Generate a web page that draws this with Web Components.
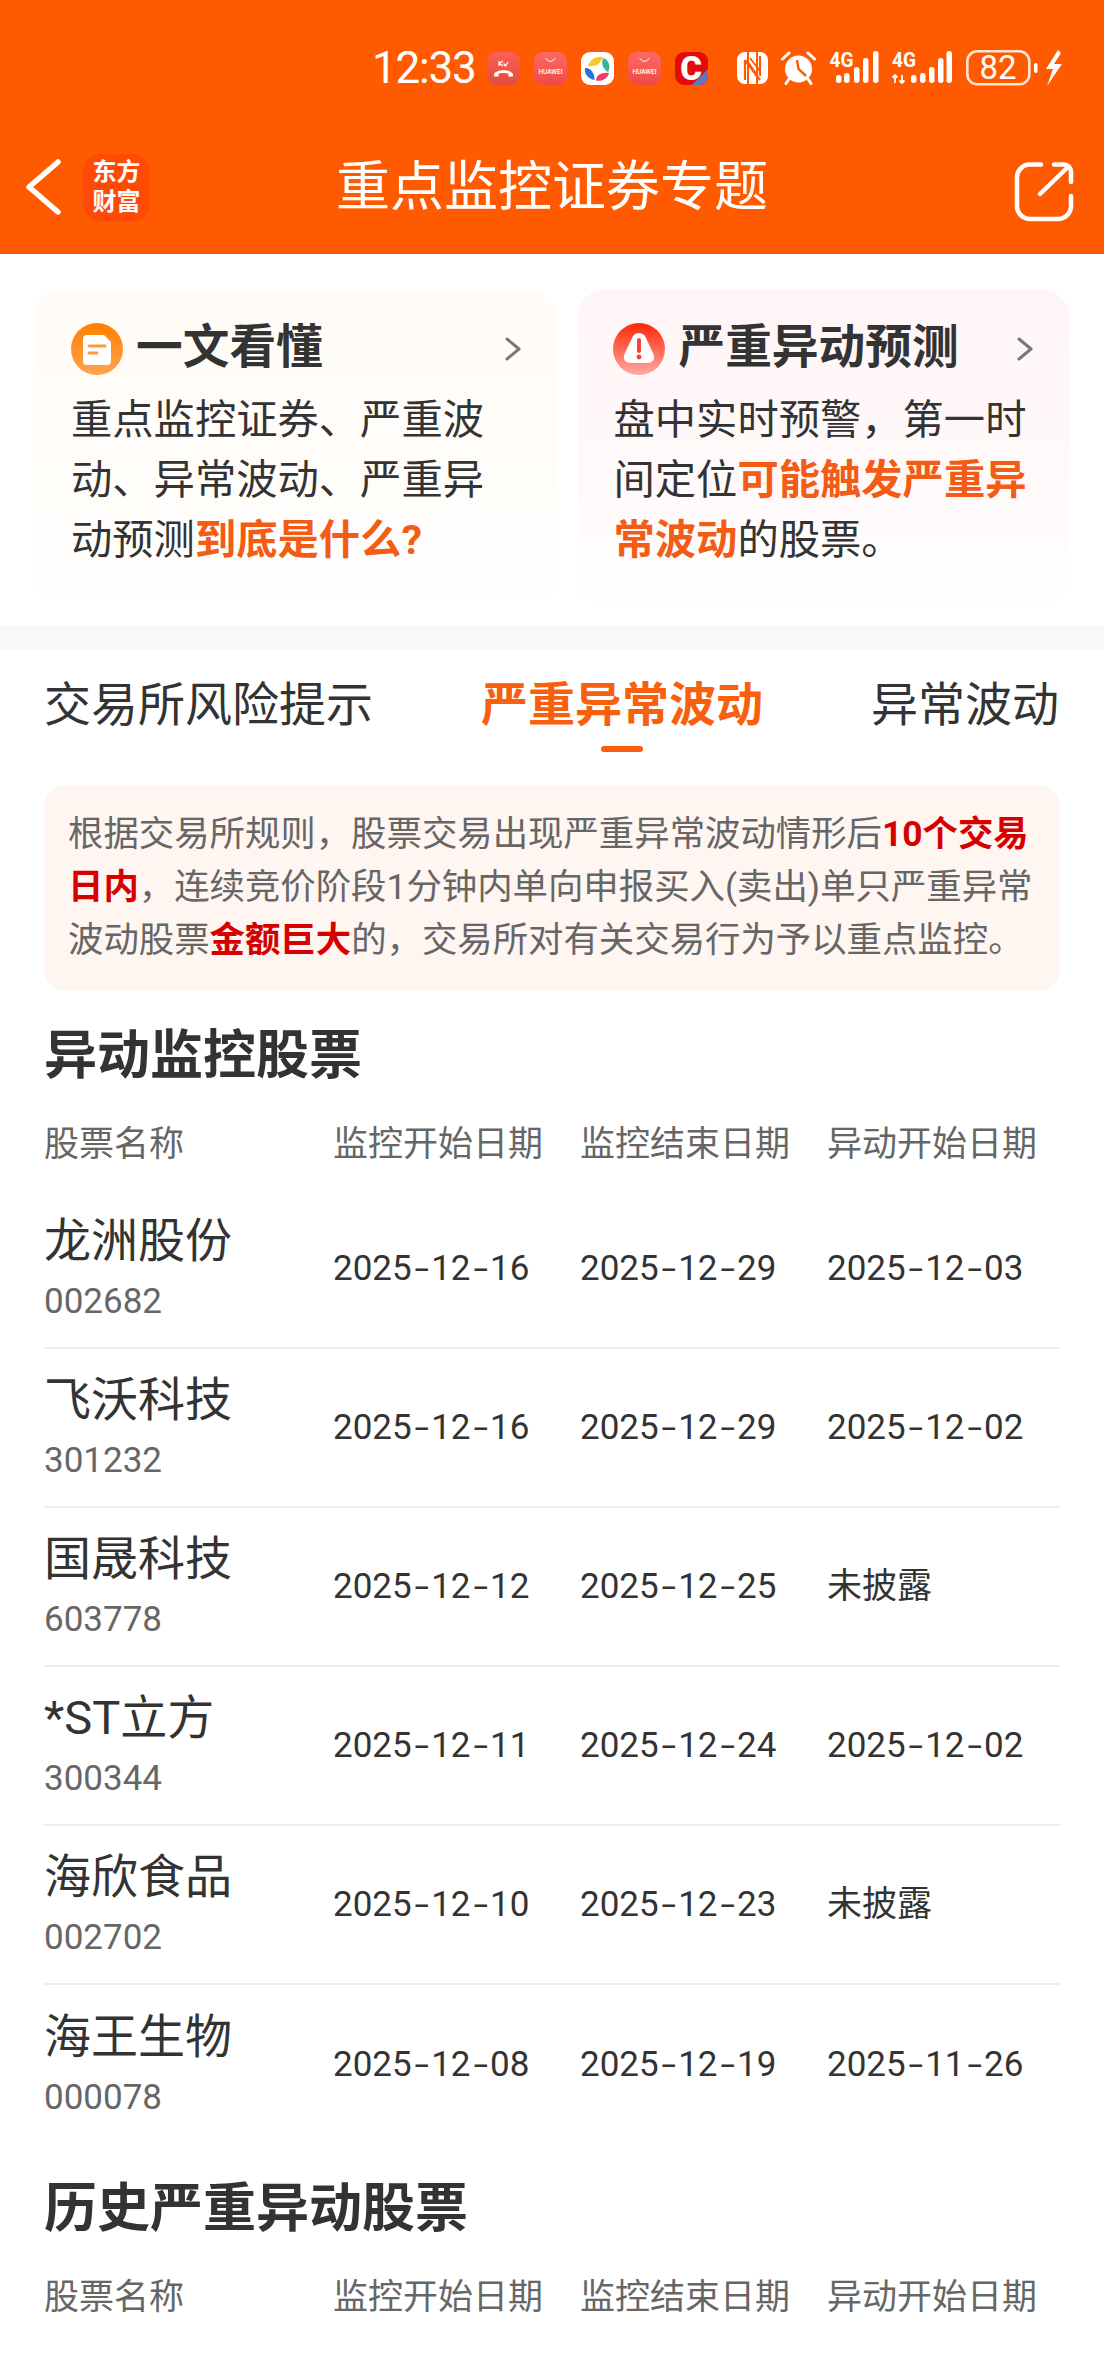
<!DOCTYPE html>
<html lang="zh-CN">
<head>
<meta charset="utf-8">
<title>重点监控证券专题</title>
<style>
    html, body {
        margin: 0;
        height: 2376px;
        overflow: hidden;
        background: #fff;
    }
    body {
        font-family: Roboto, "Noto Sans CJK SC", sans-serif;
        color: #333;
    }
    b.hi {
        color: #f25c14;
    }
    b.red {
        color: #d60000;
    }
</style>
</head>
<body>
<app-header page-title="重点监控证券专题"></app-header>

<intro-cards>
    <intro-card heading="一文看懂" kind="doc">重点监控证券、严重波动、异常波动、严重异动预测<b class="hi">到底是什么?</b></intro-card>
    <intro-card heading="严重异动预测" kind="alert">盘中实时预警，第一时间定位<b class="hi">可能触发严重异常波动</b>的股票。</intro-card>
</intro-cards>

<section-tabs></section-tabs>

<risk-notice>根据交易所规则，股票交易出现严重异常波动情形后<b class="red">10个交易日内</b>，连续竞价阶段1分钟内单向申报买入(卖出)单只严重异常波动股票<b class="red">金额巨大</b>的，交易所对有关交易行为予以重点监控。</risk-notice>

<stock-table heading="异动监控股票">
    <stock-row name="龙洲股份" code="002682" begin="2025-12-16" end="2025-12-29" move="2025-12-03"></stock-row>
    <stock-row name="飞沃科技" code="301232" begin="2025-12-16" end="2025-12-29" move="2025-12-02"></stock-row>
    <stock-row name="国晟科技" code="603778" begin="2025-12-12" end="2025-12-25" move="未披露"></stock-row>
    <stock-row name="*ST立方" code="300344" begin="2025-12-11" end="2025-12-24" move="2025-12-02"></stock-row>
    <stock-row name="海欣食品" code="002702" begin="2025-12-10" end="2025-12-23" move="未披露"></stock-row>
    <stock-row name="海王生物" code="000078" begin="2025-12-08" end="2025-12-19" move="2025-11-26" last></stock-row>
</stock-table>

<stock-table heading="历史严重异动股票" class="history">
    <stock-row name="并文方"></stock-row>
</stock-table>

<script>
class StatusBar extends HTMLElement {
    constructor() {
        super();
        this.attachShadow({ mode: "open" });

        const huawei = `
            <svg width="33" height="33" viewBox="0 0 33 33">
                <defs><linearGradient id="hw" x1="0" y1="0" x2="0" y2="1"><stop offset="0" stop-color="#ff6a63"/><stop offset="1" stop-color="#ee4a48"/></linearGradient></defs>
                <rect width="33" height="33" rx="9" fill="url(#hw)"/>
                <path d="M11.5 6 Q16.5 13 21.5 6" fill="none" stroke="#fff" stroke-width="1"/>
                <text x="16.5" y="21.5" text-anchor="middle" font-size="6.5" font-weight="500" fill="#fff" font-family="Roboto">HUAWEI</text>
            </svg>`;

        this.shadowRoot.innerHTML = `
            <style>
                :host {
                    display: flex;
                    align-items: flex-start;
                    box-sizing: border-box;
                    height: 120px;
                    padding: 50px 0 0 372px;
                    color: #fff;
                }
                .time {
                    flex: none;
                    margin-top: -8px;
                    font-size: 44px;
                    line-height: 52px;
                    letter-spacing: -1.2px;
                    white-space: nowrap;
                }
                .apps {
                    display: flex;
                    gap: 14px;
                    margin: 2px 0 0 11px;
                }
                .sys {
                    display: flex;
                    gap: 13px;
                    margin-left: 29px;
                }
                svg {
                    display: block;
                    flex: none;
                }
            </style>
            <span class="time">12:33</span>
            <div class="apps">
                <svg width="33" height="33" viewBox="0 0 33 33">
                    <defs><linearGradient id="ph" x1="0" y1="0" x2="0" y2="1"><stop offset="0" stop-color="#fb5f55"/><stop offset="1" stop-color="#e54c3f"/></linearGradient></defs>
                    <rect width="33" height="33" rx="9" fill="url(#ph)"/>
                    <path d="M12 9 V14 M16 9 L12.5 11.5 L16 14 M16.5 11.5 L18.5 14 L21 10" fill="none" stroke="#fff" stroke-width="1.3"/>
                    <path d="M7 24.5 V22 C10 17 23 17 26 22 V24.5 H21.5 V21.8 C19 20.8 14 20.8 11.5 21.8 V24.5 Z" fill="#fff"/>
                </svg>
                ${huawei}
                <svg width="33" height="33" viewBox="0 0 33 33">
                    <rect width="33" height="33" rx="9" fill="#fff"/>
                    <path d="M7 14 C9 7 16 4 22 5 C20 12 14 15 7 14Z" fill="#f7c923"/>
                    <path d="M22.5 6 C28 8 30 15 27 20 C22 17 19.5 11 22.5 6Z" fill="#35b39c"/>
                    <path d="M4 16 C9 15 14 21 13.5 28 C8 27 3 23 4 16Z" fill="#2a74d8"/>
                    <path d="M15 28.5 C15 23 21 20 28 21 C27 26 21 30 15 28.5Z" fill="#ee3d6a"/>
                </svg>
                ${huawei.replace(/"hw"/, '"hw2"').replace("#hw", "#hw2")}
                <svg width="33" height="33" viewBox="0 0 33 33">
                    <rect width="33" height="33" rx="9" fill="#e30b0b"/>
                    <text x="16" y="27.5" text-anchor="middle" font-size="33" font-weight="900" fill="#fff" font-family="Roboto">C</text>
                    <path d="M33 17 V24 A9 9 0 0 1 24 33 H17 Z" fill="#5b79c4"/>
                </svg>
            </div>
            <div class="sys">
                <svg width="31" height="32" viewBox="0 0 31 32" style="margin-top:2px">
                    <path d="M8 0 H10 V32 H8 A8 8 0 0 1 0 24 V8 A8 8 0 0 1 8 0 Z M21 0 H23 A8 8 0 0 1 31 8 V24 A8 8 0 0 1 23 32 H21 Z" fill="#fff"/>
                    <path d="M12 0 H19 V20 L12 10 Z M12 14 L19 24 V32 H12 Z" fill="#fff"/>
                    <path d="M8 8 V28 M8 8 L23 28 M23 4 V24" fill="none" stroke="#ff5a00" stroke-width="2.2"/>
                    <path d="M13 6 L23 19" fill="none" stroke="#ff5a00" stroke-width="1.8"/>
                </svg>
                <svg width="35" height="34" viewBox="0 0 35 34" style="margin-top:1px">
                    <circle cx="17.5" cy="18" r="13.5" fill="#fff"/>
                    <path d="M1.5 8 L8 2 M27 2 L33.5 8" stroke="#fff" stroke-width="3" stroke-linecap="round"/>
                    <path d="M8 28 L5 32.5 M27 28 L30 32.5" stroke="#fff" stroke-width="3" stroke-linecap="round"/>
                    <path d="M16 9 L17.5 18 L25 25" fill="none" stroke="#ff5a00" stroke-width="2.4"/>
                </svg>
                <svg width="50" height="36" viewBox="0 0 50 36">
                    <text x="0.5" y="17" font-size="20" font-weight="700" fill="#fff" textLength="24" lengthAdjust="spacingAndGlyphs" font-family="Roboto">4G</text>
                    <g fill="#fff">
                        <rect x="7" y="25" width="5.5" height="8" rx="2.7"/>
                        <rect x="15" y="23" width="5.5" height="10" rx="2.7"/>
                        <rect x="25" y="17" width="5.5" height="16" rx="2.7"/>
                        <rect x="34" y="8" width="5.5" height="25" rx="2.7"/>
                        <rect x="44" y="1" width="5.5" height="32" rx="2.7"/>
                    </g>
                </svg>
                <svg width="60" height="36" viewBox="0 0 60 36">
                    <text x="0" y="17" font-size="20" font-weight="700" fill="#fff" textLength="24" lengthAdjust="spacingAndGlyphs" font-family="Roboto">4G</text>
                    <path d="M3 33 V25 M0.5 27.5 L3 25 L5.5 27.5 M10 25 V33 M7.5 30.5 L10 33 L12.5 30.5" fill="none" stroke="#fff" stroke-width="1.8"/>
                    <g fill="#fff">
                        <rect x="19" y="25" width="5.5" height="8" rx="2.7"/>
                        <rect x="28" y="23" width="5.5" height="10" rx="2.7"/>
                        <rect x="37" y="17" width="5.5" height="16" rx="2.7"/>
                        <rect x="46" y="8" width="5.5" height="25" rx="2.7"/>
                        <rect x="54.5" y="1" width="5.5" height="32" rx="2.7"/>
                    </g>
                </svg>
                <svg width="97" height="36" viewBox="0 0 97 36" style="margin-left:1px">
                    <rect x="1.3" y="1.3" width="62" height="33" rx="10" fill="none" stroke="#ffe3d2" stroke-width="2.6"/>
                    <text x="32" y="29" text-anchor="middle" font-size="33" fill="#fff" font-family="Roboto">82</text>
                    <rect x="68" y="13" width="3.5" height="10" rx="1.7" fill="#fff"/>
                    <path d="M92 0 L80 19 H87 L81 36 L96 14 H88 L95 3 Z" fill="#fff"/>
                </svg>
            </div>
        `;
    }
}

class AppHeader extends HTMLElement {
    constructor() {
        super();
        this.attachShadow({ mode: "open" });
        this.shadowRoot.innerHTML = `
            <style>
                :host {
                    display: block;
                    height: 254px;
                    background: #ff5a00;
                    color: #fff;
                }
                nav {
                    display: grid;
                    grid-template-columns: 1fr auto 1fr;
                    align-items: center;
                    height: 134px;
                }
                .left {
                    display: flex;
                    align-items: center;
                    gap: 22px;
                    padding-left: 25px;
                }
                .logo {
                    width: 67px;
                    height: 67px;
                    border-radius: 18px;
                    background: #ff4906;
                    display: flex;
                    flex-direction: column;
                    align-items: center;
                    justify-content: center;
                    font-size: 24px;
                    line-height: 30px;
                    font-weight: 700;
                    white-space: nowrap;
                }
                h1 {
                    margin: 2px 0 0;
                    font-size: 54px;
                    font-weight: 400;
                    line-height: 70px;
                }
                .right {
                    display: flex;
                    justify-content: flex-end;
                    padding: 9px 28px 0 0;
                }
                svg {
                    display: block;
                }
            </style>
            <status-bar></status-bar>
            <nav>
                <div class="left">
                    <svg width="36" height="56" viewBox="0 0 36 56" fill="none" stroke="#fff" stroke-width="5.5" stroke-linecap="round" stroke-linejoin="round"><path d="M33 3 L4 28 L33 53"/></svg>
                    <div class="logo"><span>东方</span><span>财富</span></div>
                </div>
                <h1></h1>
                <div class="right">
                    <svg width="64" height="64" viewBox="0 0 64 64" fill="none" stroke="#fff" stroke-width="4.5" stroke-linecap="round">
                        <path d="M29 4.5 H18 a13 13 0 0 0 -13 13 V46 a13 13 0 0 0 13 13 H46 a13 13 0 0 0 13 -13 V36"/>
                        <path d="M42 4.5 H52 a7 7 0 0 1 7 7 V22"/>
                        <path d="M28 34 L56 7"/>
                    </svg>
                </div>
            </nav>
        `;
    }

    connectedCallback() {
        this.shadowRoot.querySelector("h1").textContent = this.getAttribute("page-title");
    }
}

class IntroCards extends HTMLElement {
    constructor() {
        super();
        this.attachShadow({ mode: "open" });
        this.shadowRoot.innerHTML = `
            <style>
                :host {
                    display: flex;
                    gap: 21px;
                    box-sizing: border-box;
                    height: 396px;
                    padding: 36px 35px 16px 34px;
                    border-bottom: 24px solid #f7f8fa;
                }
            </style>
            <slot></slot>
        `;
    }
}

class IntroCard extends HTMLElement {
    constructor() {
        super();
        this.attachShadow({ mode: "open" });
        this.shadowRoot.innerHTML = `
            <style>
                :host {
                    display: block;
                    box-sizing: border-box;
                    border-radius: 26px;
                    padding: 33px 0 0 37px;
                    width: 524px;
                    background: linear-gradient(#fffcf7, #fffdfa 60%, #fff);
                }
                :host([kind="alert"]) {
                    width: 491px;
                    padding-left: 35px;
                    background: linear-gradient(#fff5f6, #fff9fa 60%, #fff);
                }
                .head {
                    display: flex;
                    align-items: center;
                    height: 52px;
                    position: relative;
                }
                h2 {
                    margin: 0 0 4px 13px;
                    font-size: 46.7px;
                    font-weight: 700;
                    line-height: 52px;
                    white-space: nowrap;
                    color: #333;
                }
                .chev {
                    position: absolute;
                    right: 36px;
                    top: 14px;
                }
                .body {
                    width: 415px;
                    margin-top: 15px;
                    font-size: 41.3px;
                    line-height: 60px;
                    color: #333;
                }
                svg {
                    display: block;
                    flex: none;
                }
            </style>
            <div class="head">
                <span class="icon"></span>
                <h2></h2>
                <svg class="chev" width="16" height="24" viewBox="0 0 16 24" fill="none" stroke="#777" stroke-width="3" stroke-linecap="round" stroke-linejoin="round"><path d="M2 2 L14 12 L2 22"/></svg>
            </div>
            <div class="body"><slot></slot></div>
        `;
    }

    connectedCallback() {
        this.shadowRoot.querySelector("h2").textContent = this.getAttribute("heading");
        const doc = `
            <svg width="52" height="52" viewBox="0 0 52 52">
                <defs><linearGradient id="g" x1="0" y1="0" x2="0" y2="1"><stop offset="0" stop-color="#ff8000"/><stop offset="1" stop-color="#ffa44f"/></linearGradient></defs>
                <circle cx="26" cy="26" r="26" fill="url(#g)"/>
                <path d="M16 12 H33 L40 19 V38 a4 4 0 0 1 -4 4 H16 a4 4 0 0 1 -4 -4 V16 a4 4 0 0 1 4 -4 Z" fill="#fff"/>
                <path d="M18 23 H34 M18 30 H26" stroke="#ff9a3c" stroke-width="3" stroke-linecap="round"/>
            </svg>`;
        const alert = `
            <svg width="52" height="52" viewBox="0 0 52 52">
                <defs><linearGradient id="g" x1="0" y1="0" x2="0" y2="1"><stop offset="0" stop-color="#ff2708"/><stop offset="1" stop-color="#ffaaa2"/></linearGradient></defs>
                <circle cx="26" cy="26" r="26" fill="url(#g)"/>
                <path d="M20 13 C23 9 29 9 32 13 L40 30 C43 36 40 40 34 40 H18 C12 40 9 36 12 30 Z" fill="#fff"/>
                <path d="M26 17 V28" stroke="#f0453a" stroke-width="4" stroke-linecap="round"/>
                <circle cx="26" cy="34" r="2.4" fill="#f0453a"/>
            </svg>`;
        this.shadowRoot.querySelector(".icon").innerHTML = this.getAttribute("kind") === "alert" ? alert : doc;
    }
}

class SectionTabs extends HTMLElement {
    constructor() {
        super();
        this.attachShadow({ mode: "open" });
        this.shadowRoot.innerHTML = `
            <style>
                :host {
                    display: flex;
                    gap: 108px;
                    box-sizing: border-box;
                    height: 135px;
                    padding: 25px 0 0 44px;
                    font-size: 47px;
                    line-height: 60px;
                    white-space: nowrap;
                    color: #333;
                }
                .tab {
                    position: relative;
                }
                .active {
                    color: #f85f0f;
                    font-weight: 700;
                }
                .active::after {
                    content: "";
                    position: absolute;
                    left: 120px;
                    top: 71px;
                    width: 42px;
                    height: 6px;
                    border-radius: 3px;
                    background: #f85f0f;
                }
            </style>
            <span class="tab">交易所风险提示</span>
            <span class="tab active">严重异常波动</span>
            <span class="tab">异常波动</span>
        `;
    }
}

class RiskNotice extends HTMLElement {
    constructor() {
        super();
        this.attachShadow({ mode: "open" });
        this.shadowRoot.innerHTML = `
            <style>
                :host {
                    display: block;
                    box-sizing: border-box;
                    margin: 0 44px;
                    height: 206px;
                    padding: 23px 20px 0 24px;
                    border-radius: 22px;
                    background: #fff5f1;
                    font-size: 35.4px;
                    line-height: 53px;
                    color: #666;
                }
            </style>
            <slot></slot>
        `;
    }
}

class StockTable extends HTMLElement {
    constructor() {
        super();
        this.attachShadow({ mode: "open" });
        this.shadowRoot.innerHTML = `
            <style>
                :host {
                    display: block;
                    padding: 29px 44px 0;
                }
                h3 {
                    margin: 1px 0 -1px;
                    font-size: 53px;
                    font-weight: 700;
                    line-height: 70px;
                    color: #333;
                }
                .cols {
                    display: grid;
                    grid-template-columns: 289px 247px 247px 1fr;
                    align-items: center;
                    height: 50px;
                    padding: 30px 0 20px;
                    font-size: 35px;
                    line-height: 50px;
                    color: #666;
                    white-space: nowrap;
                }
                :host(.history) .cols {
                    padding-bottom: 26px;
                }
            </style>
            <h3></h3>
            <div class="cols">
                <span>股票名称</span>
                <span>监控开始日期</span>
                <span>监控结束日期</span>
                <span>异动开始日期</span>
            </div>
            <slot></slot>
        `;
    }

    connectedCallback() {
        this.shadowRoot.querySelector("h3").textContent = this.getAttribute("heading");
    }
}

class StockRow extends HTMLElement {
    constructor() {
        super();
        this.attachShadow({ mode: "open" });
        this.shadowRoot.innerHTML = `
            <style>
                :host {
                    display: grid;
                    grid-template-columns: 289px 247px 247px 1fr;
                    align-items: center;
                    box-sizing: border-box;
                    height: 159px;
                    border-bottom: 2px solid #ececec;
                    color: #333;
                    white-space: nowrap;
                }
                :host([last]) {
                    border-bottom: 0;
                }
                .stock {
                    padding-top: 6px;
                }
                .name {
                    font-size: 47px;
                    line-height: 60px;
                }
                .code {
                    min-height: 62px;
                    font-size: 35px;
                    line-height: 62px;
                    color: #666;
                }
                .date {
                    font-size: 35px;
                    line-height: 50px;
                }
                /* the reference font has a much wider hyphen than Roboto */
                i {
                    display: inline-block;
                    width: 19.5px;
                    text-align: center;
                    font-style: normal;
                    transform: scaleX(1.5);
                }
            </style>
            <div class="stock">
                <div class="name"></div>
                <div class="code"></div>
            </div>
            <div class="date" data-key="begin"></div>
            <div class="date" data-key="end"></div>
            <div class="date" data-key="move"></div>
        `;
    }

    connectedCallback() {
        this.shadowRoot.querySelector(".name").textContent = this.getAttribute("name");
        this.shadowRoot.querySelector(".code").textContent = this.getAttribute("code") || "";
        this.shadowRoot.querySelectorAll(".date").forEach(cell => {
            const value = this.getAttribute(cell.dataset.key) || "";
            cell.innerHTML = value.replace(/-/g, "<i>-</i>");
        });
    }
}

customElements.define("status-bar", StatusBar);
customElements.define("app-header", AppHeader);
customElements.define("intro-cards", IntroCards);
customElements.define("intro-card", IntroCard);
customElements.define("section-tabs", SectionTabs);
customElements.define("risk-notice", RiskNotice);
customElements.define("stock-table", StockTable);
customElements.define("stock-row", StockRow);
</script>
</body>
</html>
